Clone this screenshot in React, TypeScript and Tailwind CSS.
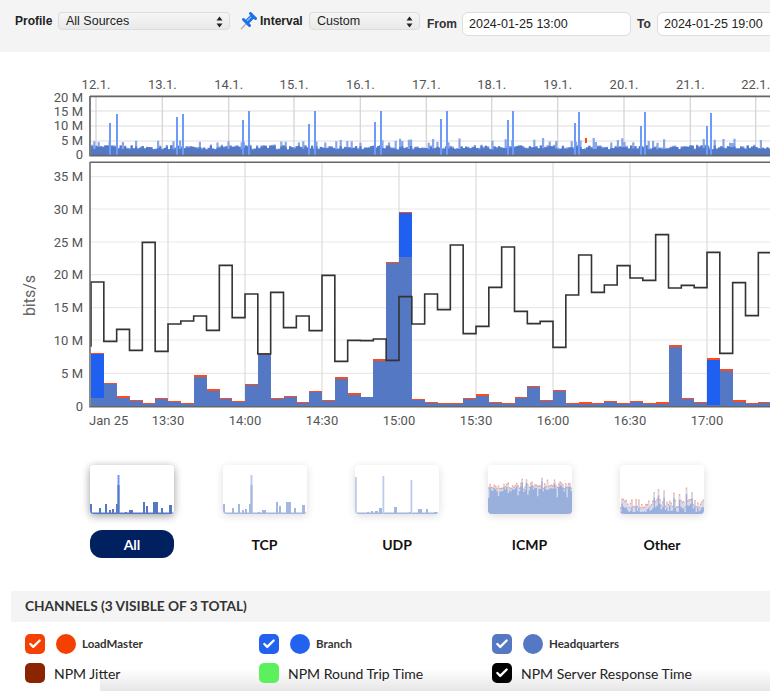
import { Check } from "lucide-react";

const HQ = "#5578c4";
const BRANCH = "#1f60f0";
const ORANGE = "#ff4a1c";

// seeded noise so the picture stays the same on every load
function noise(seed: number) {
  const x = Math.sin(seed * 127.1 + 311.7) * 43758.5453;
  return x - Math.floor(x);
}

// closed step outline along the bottom of a chart
function stepArea(heights: number[], x0: number, w: number, base: number) {
  let d = `M${x0} ${base}`;
  heights.forEach((h, i) => {
    d += ` V${base - h} H${x0 + (i + 1) * w}`;
  });
  return d + ` V${base} Z`;
}

const yTicks = [
  { label: "35 M", z: 50 },
  { label: "30 M", z: 147 },
  { label: "25 M", z: 246 },
  { label: "20 M", z: 344 },
  { label: "15 M", z: 443 },
  { label: "10 M", z: 540 },
  { label: "5 M", z: 640 },
  { label: "0", z: 740 },
];

const xTicks = [
  { label: "13:30", x: 168 },
  { label: "14:00", x: 245 },
  { label: "14:30", x: 322 },
  { label: "15:00", x: 399 },
  { label: "15:30", x: 476 },
  { label: "16:00", x: 553 },
  { label: "16:30", x: 630 },
  { label: "17:00", x: 707 },
];

// [total top, headquarters top, branch top or 0]
const bars: number[][] = [
  [578, 715, 581], [670, 673, 0], [708, 713, 0], [720, 722, 0], [729, 731, 0], [714, 716, 0],
  [722, 725, 0], [730, 732, 0], [645, 650, 0], [687, 693, 0], [714, 718, 0], [724, 727, 0],
  [673, 675, 0], [578, 582, 0], [714, 718, 0], [708, 711, 0], [727, 729, 0], [692, 696, 0],
  [720, 723, 0], [652, 656, 0], [700, 706, 0], [710, 712, 0], [598, 602, 0], [305, 310, 0],
  [155, 292, 158], [716, 719, 0], [725, 729, 0], [730, 731, 0], [729, 731, 0], [714, 717, 0],
  [703, 707, 0], [725, 728, 0], [729, 733, 0], [711, 714, 0], [677, 681, 0], [719, 724, 0],
  [690, 693, 0], [729, 731, 0], [726, 731, 0], [728, 731, 0], [722, 725, 0], [728, 731, 0],
  [722, 725, 0], [730, 732, 0], [727, 731, 0], [556, 561, 0], [713, 716, 0], [725, 730, 0],
  [595, 735, 599], [628, 633, 0], [721, 725, 0], [729, 732, 0], [727, 730, 0], [729, 732, 0],
];

const line = [
  366, 544, 508, 571, 247, 574, 492, 483, 468, 511, 316, 473, 402, 582, 397, 503, 468, 512,
  346, 604, 541, 542, 537, 601, 410, 492, 402, 449, 255, 521, 499, 382, 261, 454, 491, 484,
  562, 405, 285, 397, 375, 317, 354, 361, 224, 384, 376, 383, 277, 580, 368, 467, 278, 400,
];

const BAR_W = 77 / 6;
const barX = (i: number) => 91 + i * BAR_W;
const py = (z: number) => 160 + z / 3;

function linePath() {
  let d = `M91 ${py(560)} L91 ${py(line[0])}`;
  line.forEach((z, i) => {
    d += ` L${barX(i)} ${py(z)} L${barX(i + 1)} ${py(z)}`;
  });
  return d;
}

function MainChart() {
  return (
    <svg className="block overflow-visible" width="770" height="268" viewBox="0 162 770 268" style={{ fontFamily: "Roboto, sans-serif" }}>
      {yTicks.slice(0, 7).map((t) => (
        <line key={t.label} x1="90" x2="770" y1={py(t.z)} y2={py(t.z)} stroke="#e9e9e9" strokeWidth="1.2" />
      ))}
      {xTicks.map((t) => (
        <line key={t.label} x1={t.x} x2={t.x} y1="162" y2="406" stroke="#dcdcdc" strokeWidth="1.2" />
      ))}
      {bars.map(([top, hq, blue], i) => {
        const x = barX(i);
        return (
          <g key={i} shapeRendering="crispEdges">
            <rect x={x} y={py(top)} width={BAR_W + 0.3} height={Math.max(py(hq) - py(top), 1.2)} fill={ORANGE} />
            {blue > 0 && <rect x={x} y={py(blue)} width={BAR_W + 0.3} height={py(hq) - py(blue)} fill={BRANCH} />}
            <rect x={x} y={py(hq)} width={BAR_W + 0.3} height={py(740) - py(hq)} fill={HQ} />
          </g>
        );
      })}
      <path d={linePath()} fill="none" stroke="#333" strokeWidth="1.6" />
      <path d="M90 162.3 H770 M90 162 V406.7 M89.3 406.7 H770" stroke="#666" strokeWidth="1.5" fill="none" />
      {yTicks.map((t) => (
        <text key={t.label} x="83" y={py(t.z) + 4.5} textAnchor="end" fontSize="13" fill="#555">
          {t.label}
        </text>
      ))}
      <text x="89" y="425" fontSize="13" fill="#555">Jan 25</text>
      {xTicks.map((t) => (
        <text key={t.label} x={t.x} y="425" textAnchor="middle" fontSize="13" fill="#555">
          {t.label}
        </text>
      ))}
      <text x="0" y="0" transform="translate(35 295.5) rotate(-90)" textAnchor="middle" fontSize="16" fill="#666">
        bits/s
      </text>
    </svg>
  );
}

const days = [
  { label: "12.1.", x: 96 }, { label: "13.1.", x: 162.3 }, { label: "14.1.", x: 228.7 }, { label: "15.1.", x: 294 },
  { label: "16.1.", x: 360.3 }, { label: "17.1.", x: 426.3 }, { label: "18.1.", x: 491.7 }, { label: "19.1.", x: 557.7 },
  { label: "20.1.", x: 624 }, { label: "21.1.", x: 690.3 }, { label: "22.1.", x: 755.7 },
];

const spikes = [
  [109, 32], [116, 41], [176, 38], [182, 41], [242, 35], [248, 44], [308, 31], [314, 44], [374, 33], [380, 44],
  [440, 36], [446, 44], [507, 35], [512, 44], [574, 32], [578, 43], [640, 29], [644, 43], [706, 29], [710, 42],
];

function OverviewChart() {
  const darkH: number[] = [];
  const lightH: number[] = [];
  for (let i = 0; i < 310; i++) {
    const dark = 5.5 + noise(i) * 4;
    const light = noise(i + 1000) > 0.8 ? 12 + noise(i + 2000) * 5 : dark + noise(i + 3000) * 1.5;
    darkH.push(dark);
    lightH.push(light);
  }
  return (
    <svg className="block overflow-visible" width="770" height="86" viewBox="0 76 770 86" style={{ fontFamily: "Roboto, sans-serif" }}>
      {[111, 126, 141].map((y) => (
        <line key={y} x1="90" x2="770" y1={y} y2={y} stroke="#dedede" strokeWidth="1.2" />
      ))}
      {days.map((d) => (
        <line key={d.label} x1={d.x} x2={d.x} y1="97" y2="155" stroke="#d2d2d2" strokeWidth="1.2" />
      ))}
      <path d={stepArea(lightH, 91, 2.2, 155)} fill="#88a6ea" />
      <path d={stepArea(darkH, 91, 2.2, 155)} fill="#5578c4" />
      {spikes.map(([x, h]) => (
        <rect key={x} x={x} y={155 - h} width="2" height={h} fill="#6e9bf7" />
      ))}
      <rect x="585" y="138" width="2" height="5" fill={ORANGE} />
      <path d="M90 96.3 H770 M90 96 V155.7 M89.3 155.7 H770" stroke="#666" strokeWidth="1.7" fill="none" />
      {["20 M", "15 M", "10 M", "5 M", "0"].map((label, i) => (
        <text key={label} x="83" y={101.5 + i * 14.4} textAnchor="end" fontSize="13" fill="#555">
          {label}
        </text>
      ))}
      {days.map((d) => (
        <text key={d.label} x={d.x} y="89" textAnchor="middle" fontSize="13" fill="#555">
          {d.label}
        </text>
      ))}
    </svg>
  );
}

type Kind = "all" | "tcp" | "udp" | "icmp" | "other";

// [x, width, height] of the sparse traffic blips
const allBlips = [
  [0, 2, 10], [9, 2, 6], [15, 2, 10], [19, 2, 4], [22, 2, 5], [26, 3, 10], [35, 2, 2], [39, 4, 4],
  [53, 2, 12], [56, 2, 8], [63, 5, 12], [71, 2, 6], [79, 3, 9],
];
const udpBlips = [
  [12, 2, 2], [16, 2, 3], [20, 3, 3], [24, 3, 6], [40, 2, 2], [39, 3, 7], [54, 3, 2], [63, 4, 5], [71, 2, 5], [79, 3, 2],
];

function Thumb({ kind, active }: { kind: Kind; active?: boolean }) {
  let content = null;
  if (kind === "icmp" || kind === "other") {
    const h: number[] = [];
    for (let i = 0; i < 60; i++) {
      const n = noise(i + (kind === "icmp" ? 500 : 700));
      const peak = noise(i + 900) > 0.86;
      h.push(kind === "icmp" ? 24 + n * 6 + (peak ? 6 : 0) : 5 + n * 9 + (peak ? 12 : 0));
    }
    const fill = h.map((v, i) => Math.max(v - (kind === "icmp" ? (i % 7 === 0 ? 9 : 2) : 3 + noise(i) * 4), 2));
    content = (
      <>
        <path d={stepArea(h.map((v) => v + 1.5), 0, 1.4, 49)} fill="#f4a48c" />
        <path d={stepArea(h, 0, 1.4, 49)} fill="#d3dcf0" />
        <path d={stepArea(fill, 0, 1.4, 49)} fill="#9ab0dc" />
      </>
    );
  } else {
    const color = active ? HQ : "#a3b7e0";
    const light = active ? "#6e9bf7" : "#bccbec";
    const blips = kind === "udp" ? udpBlips : allBlips;
    content = (
      <>
        <rect x="0" y="47.5" width="84" height="1.5" fill={color} />
        {blips.map(([x, w, h]) => (
          <rect key={`${x}-${h}`} x={x} y={49 - h} width={w} height={h} fill={color} />
        ))}
        {kind === "udp" ? (
          [[0, 37], [27.5, 38], [55.5, 34]].map(([x, h]) => (
            <rect key={x} x={x} y={49 - h} width="1.8" height={h} fill={light} />
          ))
        ) : (
          <>
            <rect x="27.5" y="10" width="2" height="39" fill={light} />
            <rect x="27.5" y="20" width="2" height="29" fill={color} />
          </>
        )}
      </>
    );
  }
  return (
    <div
      className={`w-[84px] h-[49px] rounded-[4px] bg-white overflow-hidden ${
        active ? "shadow-[0_2px_9px_rgba(0,0,0,0.4)]" : "shadow-[0_2px_8px_rgba(0,0,0,0.14)]"
      }`}
    >
      <svg className="block" width="84" height="49" viewBox="0 0 84 49">
        {content}
      </svg>
    </div>
  );
}

function Traffic({ label, kind, active }: { label: string; kind: Kind; active?: boolean }) {
  return (
    <div className="w-[84px] flex flex-col items-center">
      <Thumb kind={kind} active={active} />
      <div
        className={`mt-[16px] w-[84px] h-[28px] flex items-center justify-center rounded-[12px] text-[14px] font-bold ${
          active ? "bg-[#00205f] text-white" : "text-[#111]"
        }`}
      >
        {label}
      </div>
    </div>
  );
}

function UpDown() {
  return (
    <svg width="7" height="12" viewBox="0 0 7 12" className="absolute right-[6px] top-[3px]">
      <path d="M3.5 0.5 L6.5 4.5 H0.5 Z M3.5 11.5 L0.5 7.5 H6.5 Z" fill="#222" />
    </svg>
  );
}

function FakeSelect({ value, w }: { value: string; w: string }) {
  return (
    <div className={`relative shrink-0 h-[18px] ${w} rounded-[4px] border border-[#dcdcdc] bg-gradient-to-b from-[#f6f6f6] to-[#e9e9e9] pl-[7px] text-[12.5px] leading-[16px] text-[#222]`}>
      {value}
      <UpDown />
    </div>
  );
}

function Box({ color, checked }: { color: string; checked?: boolean }) {
  return (
    <div className="w-[20px] h-[20px] rounded-[5px] flex items-center justify-center shrink-0" style={{ backgroundColor: color }}>
      {checked && <Check size={14} color="#fff" strokeWidth={4} />}
    </div>
  );
}

function Source({ color, label, w }: { color: string; label: string; w: string }) {
  return (
    <div className={`flex items-center ${w}`}>
      <Box color={color} checked />
      <div className="ml-[11px] w-[20px] h-[20px] rounded-full" style={{ backgroundColor: color }} />
      <span className="ml-[6px] text-[11.5px] font-bold text-[#333]">{label}</span>
    </div>
  );
}

function Metric({ color, label, checked, w }: { color: string; label: string; checked?: boolean; w: string }) {
  return (
    <div className={`flex items-center ${w}`}>
      <Box color={color} checked={checked} />
      <span className="ml-[9px] text-[14px] text-[#222] whitespace-nowrap">{label}</span>
    </div>
  );
}

export default function App() {
  return (
    <div className="relative w-[770px] h-[691px] overflow-hidden bg-white">
      {/* fade at the bottom edge of the page */}
      <div className="absolute left-[100px] right-0 bottom-0 h-[22px] bg-gradient-to-b from-transparent to-[#e6e6e6]" />

      {/* Toolbar */}
      <div className="h-[52px] bg-[#f4f4f4] flex items-start pl-[15px] pt-[12px] font-['Liberation_Sans',sans-serif] whitespace-nowrap">
        <span className="shrink-0 w-[43px] text-[12px] leading-[18px] font-bold text-[#222]">Profile</span>
        <FakeSelect value="All Sources" w="w-[172px]" />
        <svg width="17" height="18" viewBox="0 0 17 18" className="ml-[10px] shrink-0">
          <path d="M1 17 L7 11" stroke="#b0b0b0" strokeWidth="1.4" />
          <path d="M6.5 10.5 L12.5 4.5" stroke="#1f6fe8" strokeWidth="5" />
          <path d="M3.5 7.5 L9.5 13.5" stroke="#1f6fe8" strokeWidth="3" strokeLinecap="round" />
          <path d="M10.5 1.5 L15.5 6.5" stroke="#1f6fe8" strokeWidth="3" strokeLinecap="round" />
          <path d="M7 9 L11 5" stroke="#8fc0ff" strokeWidth="1.2" />
        </svg>
        <span className="shrink-0 ml-[3px] w-[49px] text-[12px] leading-[18px] font-bold text-[#222]">Interval</span>
        <FakeSelect value="Custom" w="w-[111px]" />
        <span className="shrink-0 ml-[7px] mt-[3px] w-[35px] text-[12px] leading-[18px] font-bold text-[#333]">From</span>
        <div className="shrink-0 w-[169px] h-[24px] rounded-[6px] border border-[#dedede] bg-white pl-[6px] text-[12.5px] leading-[22px] text-[#222]">2024-01-25 13:00</div>
        <span className="shrink-0 ml-[6px] mt-[3px] w-[20px] text-[12px] leading-[18px] font-bold text-[#333]">To</span>
        <div className="shrink-0 w-[169px] h-[24px] rounded-[6px] border border-[#dedede] bg-white pl-[6px] text-[12.5px] leading-[22px] text-[#222]">2024-01-25 19:00</div>
      </div>

      {/* Charts */}
      <div className="mt-[24px]">
        <OverviewChart />
        <MainChart />
      </div>

      {/* Traffic type thumbs */}
      <div className="mt-[35px] pl-[90px] flex gap-[48.5px] font-['Lato',sans-serif]">
        <Traffic label="All" kind="all" active />
        <Traffic label="TCP" kind="tcp" />
        <Traffic label="UDP" kind="udp" />
        <Traffic label="ICMP" kind="icmp" />
        <Traffic label="Other" kind="other" />
      </div>

      {/* Channels */}
      <div className="mt-[33px] ml-[11px] h-[31px] bg-[#f4f4f4] pl-[14px] flex items-center font-['Lato',sans-serif] text-[13.7px] font-bold text-[#333]">
        CHANNELS (3 VISIBLE OF 3 TOTAL)
      </div>
      <div className="relative pl-[25px] pt-[12px] font-['Lato',sans-serif]">
        <div className="flex h-[20px]">
          <Source color="#f44000" label="LoadMaster" w="w-[234px]" />
          <Source color="#2262ee" label="Branch" w="w-[233px]" />
          <Source color={HQ} label="Headquarters" w="w-[200px]" />
        </div>
        <div className="flex h-[20px] mt-[9px]">
          <Metric color="#8a2500" label="NPM Jitter" w="w-[234px]" />
          <Metric color="#5cf05c" label="NPM Round Trip Time" w="w-[233px]" />
          <Metric color="#000000" label="NPM Server Response Time" checked w="w-[240px]" />
        </div>
      </div>
    </div>
  );
}
